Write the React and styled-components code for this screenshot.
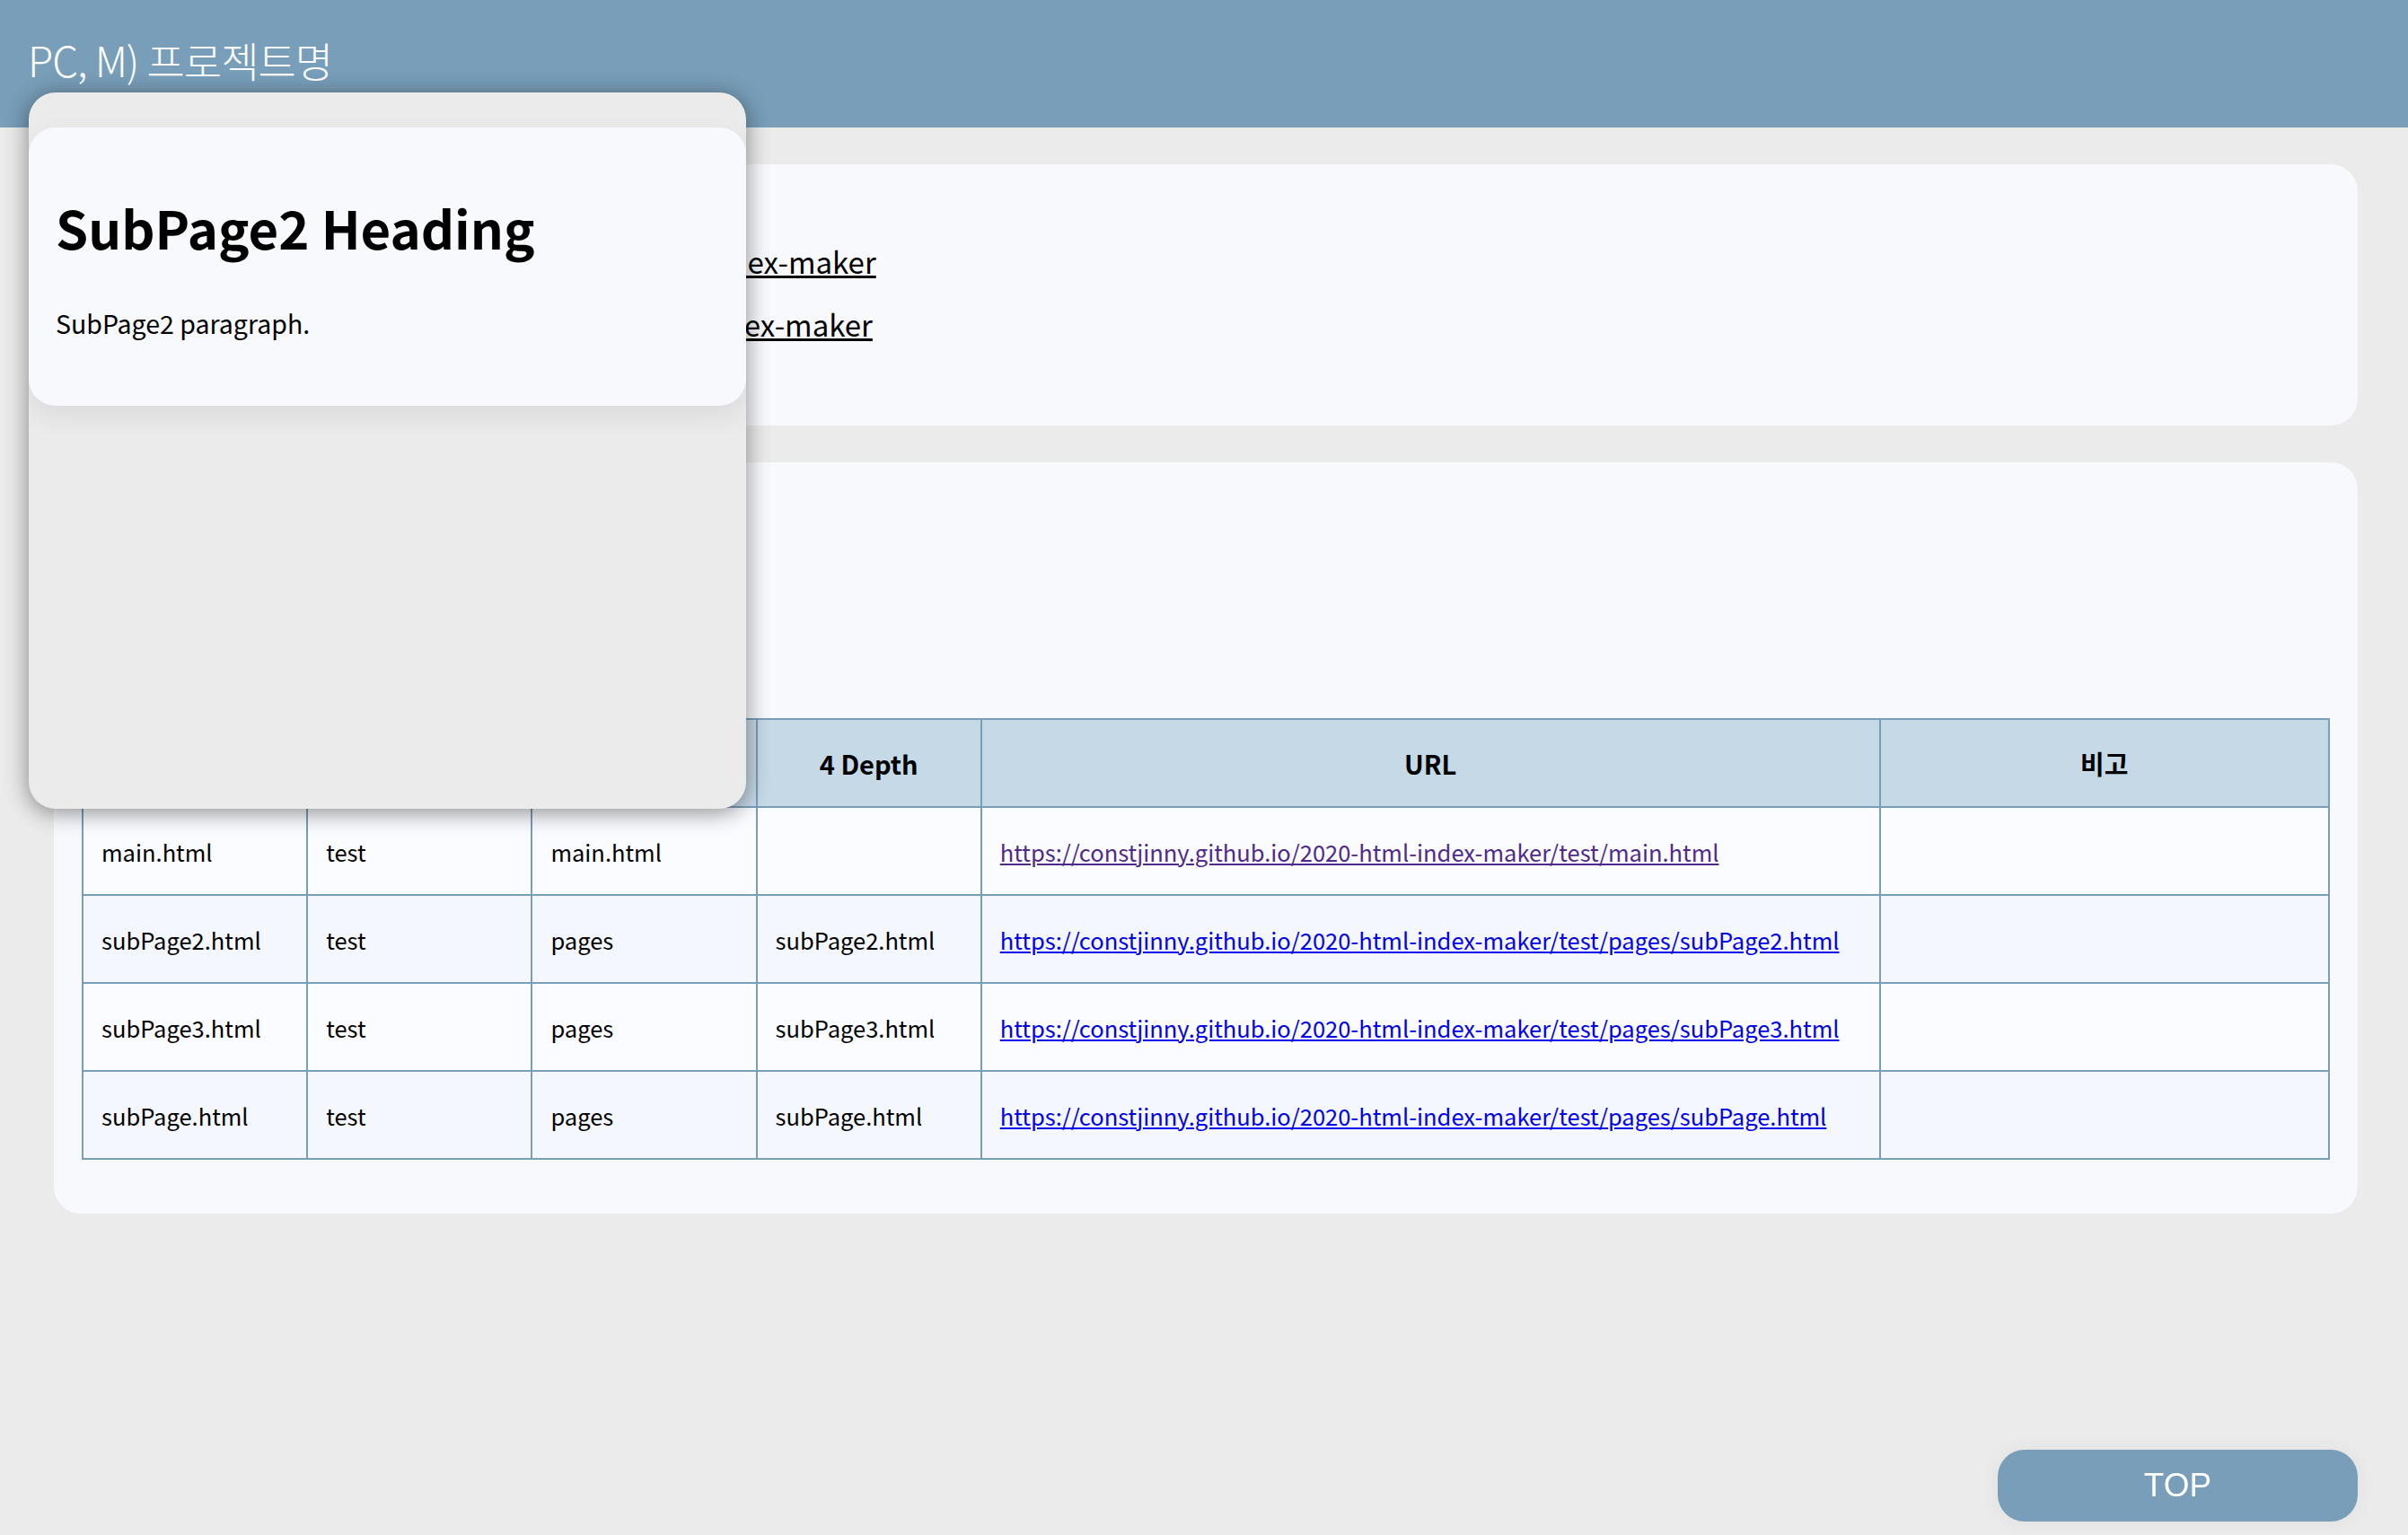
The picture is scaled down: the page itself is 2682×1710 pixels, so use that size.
import React from 'react';
import styled, { createGlobalStyle } from 'styled-components';

const GlobalStyle = createGlobalStyle`
  * {
    box-sizing: border-box;
  }
  body {
    margin: 0;
    background: #ebebeb;
    font-family: 'Noto Sans CJK KR', 'Noto Sans', sans-serif;
    color: #000;
  }
`;

const Header = styled.header`
  height: 142px;
  background: #789eb9;
  display: flex;
  align-items: center;
  padding: 0 31px 10px;
`;

const Title = styled.h1`
  margin: 0;
  font-size: 46px;
  font-weight: 300;
  color: #fff;
  letter-spacing: -1px;
`;

const Main = styled.main`
  display: flex;
  flex-direction: column;
  gap: 41px;
  padding: 41px 56px 300px 60px;
`;

const Card = styled.section`
  background: #f8f9fd;
  border-radius: 30px;
  padding: ${(props) => props.pad || '31px'};
`;

const LinkList = styled.ul`
  list-style: none;
  margin: 0;
  padding: 0;
  display: flex;
  flex-direction: column;
  gap: 22px;
`;

const LinkItem = styled.li`
  font-size: 33px;
  line-height: 48px;
  white-space: nowrap;
`;

const Label = styled.span`
  margin-right: ${(props) => props.gap || '8px'};
`;

const PlainLink = styled.a`
  color: #000;
  text-decoration: underline;
`;

const SectionTitle = styled.h2`
  margin: 0;
  font-size: 40px;
  height: 254px;
`;

const Table = styled.table`
  width: 100%;
  border-collapse: collapse;
  table-layout: fixed;
  font-size: 25.5px;
`;

const Th = styled.th`
  height: 98px;
  background: #c6d9e7;
  border: 2px solid #789eb9;
  font-size: 29px;
  font-weight: 700;
  text-align: center;
  width: ${(props) => props.w};
`;

const Row = styled.tr`
  background: ${(props) => (props.tint ? '#f4f7fe' : '#fbfcff')};
`;

const Td = styled.td`
  height: 98px;
  border: 2px solid #789eb9;
  padding: 0 20px;
  white-space: nowrap;
`;

const UrlLink = styled.a`
  color: ${(props) => (props.visited ? '#4f2a8a' : '#0000ee')};
  text-decoration: underline;
`;

const Popup = styled.div`
  position: absolute;
  top: 103px;
  left: 32px;
  width: 799px;
  height: 798px;
  border-radius: 30px;
  background: #ebebeb;
  box-shadow: 0 4px 26px rgba(0, 0, 0, 0.45);
  padding-top: 39px;
  overflow: hidden;
`;

const PreviewCard = styled.div`
  background: #f8f9fd;
  border-radius: 30px;
  height: 310px;
  padding: 66px 30px 0;
  box-shadow: 0 12px 30px rgba(0, 0, 0, 0.07);
`;

const PreviewHeading = styled.h1`
  margin: 0;
  font-size: 58px;
  font-weight: 700;
  line-height: 90px;
`;

const PreviewText = styled.p`
  margin: 41px 0 0;
  font-size: 28.5px;
`;

const TopButton = styled.button`
  position: fixed;
  right: 56px;
  bottom: 15px;
  width: 401px;
  height: 80px;
  border: none;
  border-radius: 30px;
  background: #789eb9;
  color: #fff;
  font-family: 'Liberation Sans', Arial, sans-serif;
  font-size: 37px;
  box-shadow: 0 0 24px rgba(0, 0, 0, 0.05);
  cursor: pointer;
`;

const base = 'https://constjinny.github.io/2020-html-index-maker/test/';

const rows = [
  { file: 'main.html', d2: 'test', d3: 'main.html', d4: '', url: base + 'main.html', visited: true },
  { file: 'subPage2.html', d2: 'test', d3: 'pages', d4: 'subPage2.html', url: base + 'pages/subPage2.html' },
  { file: 'subPage3.html', d2: 'test', d3: 'pages', d4: 'subPage3.html', url: base + 'pages/subPage3.html' },
  { file: 'subPage.html', d2: 'test', d3: 'pages', d4: 'subPage.html', url: base + 'pages/subPage.html' },
];

function App() {
  return (
    <>
      <GlobalStyle />
      <Header>
        <Title>PC, M) 프로젝트명</Title>
      </Header>

      <Main>
        <Card pad='84px 31px 89px'>
          <LinkList>
            <LinkItem>
              <Label gap='0'>git:</Label>
              <PlainLink href='#'>https://github.com/constjinny/2020-html-index-maker</PlainLink>
            </LinkItem>
            <LinkItem>
              <Label>URL :</Label>
              <PlainLink href='#'>https://constjinny.github.io/2020-html-index-maker</PlainLink>
            </LinkItem>
          </LinkList>
        </Card>

        <Card pad='31px 31px 60px'>
          <SectionTitle>INDEX</SectionTitle>
          <Table>
            <thead>
              <tr>
                <Th w='10%'>파일명</Th>
                <Th w='10%'>2 Depth</Th>
                <Th w='10%'>3 Depth</Th>
                <Th w='10%'>4 Depth</Th>
                <Th w='40%'>URL</Th>
                <Th w='20%'>비고</Th>
              </tr>
            </thead>
            <tbody>
              {rows.map((r, i) => (
                <Row key={r.file} tint={i % 2 === 1}>
                  <Td>{r.file}</Td>
                  <Td>{r.d2}</Td>
                  <Td>{r.d3}</Td>
                  <Td>{r.d4}</Td>
                  <Td>
                    <UrlLink href='#' visited={r.visited}>
                      {r.url}
                    </UrlLink>
                  </Td>
                  <Td></Td>
                </Row>
              ))}
            </tbody>
          </Table>
        </Card>
      </Main>

      <Popup>
        <PreviewCard>
          <PreviewHeading>SubPage2 Heading</PreviewHeading>
          <PreviewText>SubPage2 paragraph.</PreviewText>
        </PreviewCard>
      </Popup>

      <TopButton>TOP</TopButton>
    </>
  );
}

export default App;
